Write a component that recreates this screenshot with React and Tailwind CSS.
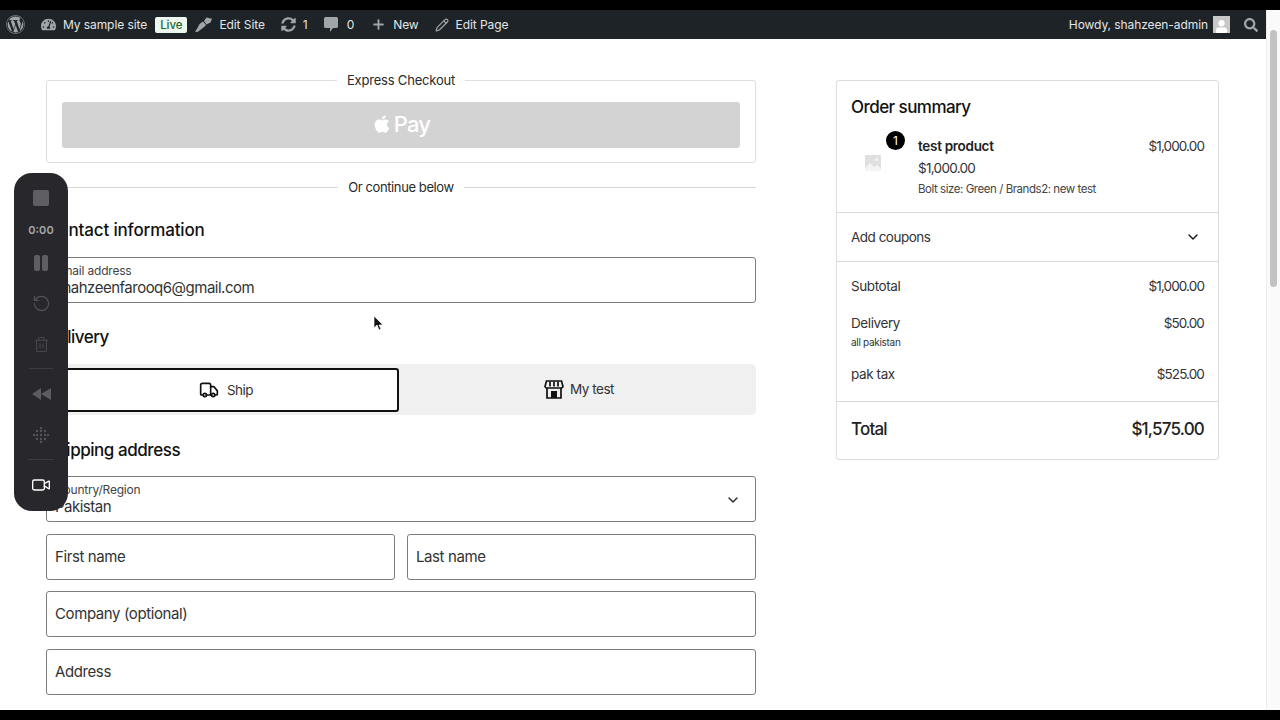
import { ChevronDown, Pencil, Plus, RotateCcw, Trash2, Truck, Video } from 'lucide-react'
import { FaApple, FaSearch, FaSyncAlt, FaTachometerAlt, FaUser, FaWordpress } from 'react-icons/fa'

function AdminItem({ icon, children, className = '' }) {
  return (
    <div className={`flex items-center gap-[7px] ${className}`}>
      {icon}
      {children && <span>{children}</span>}
    </div>
  )
}

function BrushIcon() {
  return (
    <svg width="17" height="15" viewBox="0 0 17 15" fill="#a0a5aa">
      <path d="M11.500 0.500L17 1.800 15.500 5.500 11.500 7.500 9 4z" />
      <path d="M8 4.500l3 3.500-2.500 2.500-6 4.500-2.500-.5 2.500-3.500 2-4z" />
    </svg>
  )
}

function CommentIcon() {
  return (
    <svg width="14" height="15" viewBox="0 0 14 15" fill="#a0a5aa">
      <path d="M1.500 0h11A1.500 1.500 0 0 1 14 1.500v8a1.500 1.500 0 0 1-1.500 1.500H9l-3 4v-4H1.500A1.500 1.500 0 0 1 0 9.500v-8A1.500 1.500 0 0 1 1.500 0z" />
    </svg>
  )
}

function StoreIcon() {
  return (
    <svg width="20" height="19" viewBox="0 0 20 19" fill="none" stroke="#111" strokeWidth="1.700">
      <path d="M2.500 1h15l1.500 5.500a2 2 0 0 1-2 1.500H3a2 2 0 0 1-2-1.500z" />
      <path d="M6 1.500v5M10 1.500v5M14 1.500v5" />
      <path d="M3 8v10h14V8" />
      <rect x="7" y="11" width="6" height="7" fill="#111" stroke="none" />
    </svg>
  )
}

function AdminBar() {
  return (
    <header className="flex h-[29px] shrink-0 items-center justify-between bg-[#1d2327] pl-[6px] pr-[8px] text-[12px] tracking-[-0.08px] text-[#e3e5e7] [font-family:'Inter',sans-serif]">
      <div className="flex items-center">
        <FaWordpress className="mr-[16px] text-[19px] text-[#a0a5aa]" />
        <AdminItem icon={<FaTachometerAlt className="text-[15px] text-[#a0a5aa]" />}>My sample site</AdminItem>
        <span className="mx-[8px] rounded-[2px] bg-[#edf7ee] px-[5px] text-[11.500px] leading-[16px] font-medium text-[#1e6b34]">
          Live
        </span>
        <AdminItem className="mr-[16px]" icon={<BrushIcon />}>
          Edit Site
        </AdminItem>
        <AdminItem className="mr-[16px]" icon={<FaSyncAlt className="text-[15px] text-[#a0a5aa]" />}>
          1
        </AdminItem>
        <AdminItem className="mr-[17px]" icon={<CommentIcon />}>
          <span className="ml-[2px]">0</span>
        </AdminItem>
        <AdminItem className="mr-[16px]" icon={<Plus size={15} strokeWidth={3} className="text-[#a0a5aa]" />}>
          New
        </AdminItem>
        <AdminItem icon={<Pencil size={14} className="text-[#a0a5aa]" />}>Edit Page</AdminItem>
      </div>
      <div className="flex items-center">
        <span>Howdy, shahzeen-admin</span>
        <span className="ml-[5px] flex h-[17px] w-[17px] items-end justify-center overflow-hidden bg-[#c8c8c8]">
          <FaUser className="text-[13px] text-white" />
        </span>
        <FaSearch className="ml-[14px] text-[14px] text-[#a0a5aa]" />
      </div>
    </header>
  )
}

function Divider({ label }) {
  return (
    <div className="flex items-center gap-[10px] text-[13px] leading-[20px] tracking-[-0.4px] text-[#2a2a2a]">
      <div className="h-px flex-1 bg-[#d6d6d6]" />
      <span>{label}</span>
      <div className="h-px flex-1 bg-[#d6d6d6]" />
    </div>
  )
}

function Heading({ children, className = '' }) {
  return <h2 className={`text-[17px] leading-[24px] font-medium text-[#111] ${className}`}>{children}</h2>
}

function Field({ label, value, placeholder, chevron }) {
  return (
    <div className="relative flex h-[46px] min-w-0 flex-1 basis-[46px] flex-col justify-center rounded-[3px] border border-[#7d7d7d] bg-white px-[8px]">
      {label && <div className="text-[12px] leading-[14px] tracking-[-0.2px] text-[#444]">{label}</div>}
      {value && <div className="text-[15px] leading-[19px] tracking-[-0.5px] text-[#333]">{value}</div>}
      {placeholder && <div className="text-[15px] tracking-[-0.4px] text-[#333]">{placeholder}</div>}
      {chevron && <ChevronDown size={16} strokeWidth={2} className="absolute top-[15px] right-[14px] text-[#222]" />}
    </div>
  )
}

function CheckoutForm() {
  return (
    <div className="w-[710px] shrink-0">
      <fieldset className="h-[83px] rounded-[3px] border border-[#dedede] px-[15px]">
        <legend className="mx-auto -mt-[1px] px-[10px] text-[13px] leading-[1px] tracking-[-0.2px] text-[#2a2a2a]">Express Checkout</legend>
        <div className="mt-[21px] flex h-[46px] items-center justify-center gap-[2px] rounded-[3px] bg-[#d3d3d3] pb-[2px] text-white">
          <FaApple className="text-[20px]" />
          <span className="text-[22px] font-medium tracking-[-0.8px]">Pay</span>
        </div>
      </fieldset>

      <div className="mt-[14px]">
        <Divider label="Or continue below" />
      </div>

      <Heading className="mt-[21px] tracking-[-0.15px]">Contact information</Heading>
      <div className="mt-[15px] flex h-[46px]">
        <Field label="Email address" value="shahzeenfarooq6@gmail.com" />
      </div>

      <Heading className="mt-[22px] tracking-[-0.5px]">Delivery</Heading>
      <div className="mt-[15px] flex h-[51px] items-center rounded-[5px] bg-[#f0f0f0]">
        <div className="flex h-[44px] w-[353px] items-center justify-center gap-[8px] rounded-[3px] border-2 border-[#111] bg-white pt-[1px] pl-[7px] text-[13.500px] tracking-[-0.5px] text-[#333]">
          <Truck size={20} strokeWidth={2} className="text-[#111]" />
          Ship
        </div>
        <div className="flex flex-1 items-center justify-center gap-[6px] pl-[3px] text-[13.500px] tracking-[-0.5px] text-[#333]">
          <StoreIcon />
          My test
        </div>
      </div>

      <Heading className="mt-[23px] tracking-[-0.45px]">Shipping address</Heading>
      <div className="mt-[14px] flex h-[46px]">
        <Field label="Country/Region" value="Pakistan" chevron />
      </div>
      <div className="mt-[12px] flex h-[46px] gap-[12px]">
        <Field placeholder="First name" />
        <Field placeholder="Last name" />
      </div>
      <div className="mt-[11px] flex h-[46px]">
        <Field placeholder="Company (optional)" />
      </div>
      <div className="mt-[12px] flex h-[46px]">
        <Field placeholder="Address" />
      </div>
    </div>
  )
}

function SummaryRow({ label, note, amount }) {
  return (
    <div className="flex justify-between text-[13.500px] leading-[20px] tracking-[-0.4px] text-[#333]">
      <div>
        <div>{label}</div>
        {note && <div className="mt-[2px] text-[10px] leading-[14px] tracking-[-0.3px]">{note}</div>}
      </div>
      <div className="tracking-[-0.9px]">{amount}</div>
    </div>
  )
}

function OrderSummary() {
  return (
    <aside className="h-[380px] w-[383px] shrink-0 rounded-[3px] border border-[#dcdcdc] text-[#222]">
      <div className="h-[132px] border-b border-[#d8d8d8] pt-[14px] pr-[14px] pl-[14px]">
        <Heading className="tracking-[-0.55px]">Order summary</Heading>
        <div className="relative mt-[17px] flex justify-between pl-[67px]">
          <span className="absolute top-[-5px] left-[35px] flex h-[19px] w-[19px] items-center justify-center rounded-full bg-black text-[12px] text-white">
            1
          </span>
          <svg className="absolute top-[19px] left-[14px]" width="16" height="16" viewBox="0 0 16 16">
            <rect width="16" height="16" fill="#e0e0e0" />
            <path d="M0 13l5-5 4 4 3-2 4 4v2H0z" fill="#f4f4f4" />
            <circle cx="11.500" cy="4.500" r="1.500" fill="#f4f4f4" />
          </svg>
          <div>
            <div className="text-[13.500px] leading-[20px] font-semibold tracking-[-0.3px]">test product</div>
            <div className="mt-[2px] text-[13.500px] leading-[20px] tracking-[-0.7px] text-[#333]">$1,000.00</div>
            <div className="mt-[2px] text-[11.500px] leading-[18px] tracking-[-0.45px] text-[#444]">Bolt size: Green / Brands2: new test</div>
          </div>
          <div className="text-[13.500px] leading-[20px] tracking-[-0.9px] text-[#333]">$1,000.00</div>
        </div>
      </div>
      <div className="flex h-[49px] items-center justify-between border-b border-[#d8d8d8] px-[14px] text-[13.500px] tracking-[-0.5px] text-[#333]">
        Add coupons
        <ChevronDown size={16} strokeWidth={2} className="mr-[3px] text-[#111]" />
      </div>
      <div className="flex h-[140px] flex-col gap-[17px] border-b border-[#d8d8d8] px-[14px] pt-[14px]">
        <SummaryRow label="Subtotal" amount="$1,000.00" />
        <SummaryRow label="Delivery" note="all pakistan" amount="$50.00" />
        <div className="-mt-[2px]">
          <SummaryRow label="pak tax" amount="$525.00" />
        </div>
      </div>
      <div className="flex h-[55px] items-center justify-between px-[14px] text-[17px] font-medium tracking-[-0.8px] text-[#222]">
        <span>Total</span>
        <span>$1,575.00</span>
      </div>
    </aside>
  )
}

function DotGrid() {
  const dots = [
    [8, 1], [4, 4], [8, 4], [12, 4], [1, 8], [4, 8], [8, 8], [12, 8], [15, 8], [4, 12], [8, 12], [12, 12], [8, 15],
  ]
  return (
    <svg width="16" height="16" viewBox="0 0 16 16" fill="#56565a">
      {dots.map(([x, y]) => (
        <circle key={`${x}-${y}`} cx={x} cy={y} r="1.200" />
      ))}
    </svg>
  )
}

function RecorderBar() {
  return (
    <div className="absolute top-[173px] left-[14px] flex h-[338px] w-[54px] flex-col items-center rounded-[18px] bg-[#28282c] pt-[17px] [font-family:'Inter',sans-serif]">
      <div className="h-[16px] w-[16px] rounded-[2px] bg-[#5f5f63]" />
      <div className="mt-[17px] text-[11px] leading-[14px] font-semibold text-[#a6a6a9]">0:00</div>
      <div className="mt-[18px] flex gap-[2px]">
        <span className="h-[16px] w-[6px] rounded-[2px] bg-[#5f5f63]" />
        <span className="h-[16px] w-[6px] rounded-[2px] bg-[#5f5f63]" />
      </div>
      <RotateCcw size={19} strokeWidth={1.500} className="mt-[23px] text-[#545458]" />
      <Trash2 size={17} strokeWidth={1.500} className="mt-[23px] text-[#48484c]" />
      <div className="mt-[15px] h-px w-[24px] bg-[#3c3c40]" />
      <svg className="mt-[19px]" width="19" height="12" viewBox="0 0 19 12" fill="#5c5c60">
        <path d="M9 0v12L0 6zM19 0v12l-10-6z" />
      </svg>
      <div className="mt-[27px]">
        <DotGrid />
      </div>
      <div className="mt-[16px] h-px w-[26px] bg-[#3c3c40]" />
      <Video size={20} strokeWidth={1.600} className="mt-[15px] text-white" />
    </div>
  )
}

export default function App() {
  return (
    <div className="relative flex h-[720px] flex-col overflow-hidden bg-black py-[10px] [font-family:'Inter','Liberation_Sans',sans-serif]">
      <div className="flex min-h-0 flex-1 bg-white">
        <div className="flex min-w-0 flex-1 flex-col">
          <AdminBar />
          <main className="flex gap-[80px] pt-[41px] pl-[46px]">
            <CheckoutForm />
            <OrderSummary />
          </main>
        </div>
        <div className="flex w-[14px] shrink-0 justify-center border-l border-[#ececec] bg-[#fafafa] pt-[20px]">
          <div className="h-[257px] w-[7px] rounded-full bg-[#c2c2c2]" />
        </div>
      </div>
      <RecorderBar />
      <svg className="absolute top-[315px] left-[373px]" width="11" height="16" viewBox="0 0 11 16">
        <path d="M1 1v12l3-3 2 5 2-1-2-4h4z" fill="#111" stroke="#fff" strokeWidth="0.700" />
      </svg>
    </div>
  )
}
